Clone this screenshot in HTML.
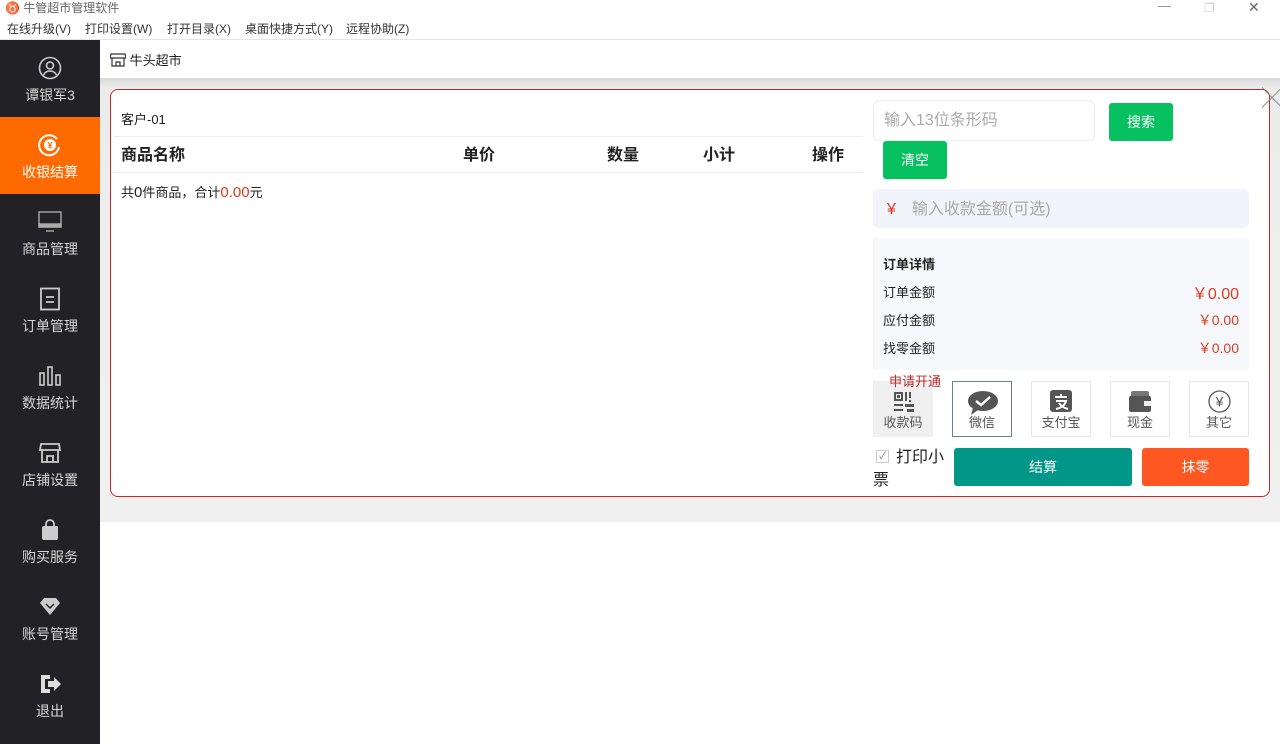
<!DOCTYPE html>
<html><head><meta charset="utf-8"><style>
*{margin:0;padding:0;box-sizing:border-box}
body{width:1280px;height:744px;overflow:hidden;background:#fff;font-family:"Liberation Sans","Noto Sans CJK SC",sans-serif;position:relative;color:#222}
.abs{position:absolute}
.title{top:0;left:0;width:1280px;height:18px;font-size:12px;color:#666;line-height:17px}
.menu{top:18px;left:0;width:1280px;height:22px;font-size:12px;color:#333;line-height:22px;border-bottom:1px solid #e5e5e5}
.menu span{position:absolute;top:0}
.side{top:40px;left:0;width:100px;height:704px;background:#222226}
.it{position:absolute;left:0;width:100px;height:77px;color:#d6d6d6;font-size:14px;text-align:center}
.it .ic{position:absolute;left:38px;top:16px;width:24px;height:24px}
.it .lb{position:absolute;top:45px;width:100px;left:0}
.act{background:#ff6a00;color:#fff}
.band{top:78px;left:100px;width:1180px;height:444px;background:linear-gradient(#d8d8d8,#ececec 10px,#f0f0f0)}
.panel{top:89px;left:110px;width:1160px;height:408px;background:#fff;border:1px solid #c0282a;border-radius:8px}
.btn{position:absolute;color:#fff;font-size:14px;text-align:center;border-radius:3px}
.pay{position:absolute;top:381px;width:60px;height:56px;border:1px solid #e6e6e6;font-size:13px;color:#555;text-align:center}
.pay .t{position:absolute;bottom:5px;width:100%;left:0}
.row{position:absolute;left:883px;width:356px;font-size:13px;color:#222}
.row b{font-weight:normal;position:absolute;right:0;color:#e03a1e;font-size:14px}
</style></head><body>
<div class="abs title"><span style="color:#a33;margin-left:5px">♉</span> 牛管超市管理软件
<span style="position:absolute;left:1158px;top:-3px;font-size:13px;color:#888">—</span>
<span style="position:absolute;left:1204px;top:0;color:#ccc">❐</span>
<span style="position:absolute;left:1248px;top:-1px;font-size:14px;color:#666">✕</span></div>
<div class="abs menu"><span style="left:7px">在线升级(V)</span><span style="left:85px">打印设置(W)</span><span style="left:167px">打开目录(X)</span><span style="left:245px">桌面快捷方式(Y)</span><span style="left:346px">远程协助(Z)</span></div>
<div class="abs side">
<div class="it" style="top:0"><svg class="ic" viewBox="0 0 24 24" fill="none" stroke="#ccc" stroke-width="1.6"><circle cx="12" cy="12" r="10.5"/><circle cx="12" cy="9.5" r="3.5"/><path d="M5.5 19c1.5-3 4-4 6.5-4s5 1 6.5 4"/></svg><div class="lb">谭银军3</div></div>
<div class="it act" style="top:77px"><svg class="ic" viewBox="0 0 24 24" fill="none" stroke="#fff" stroke-width="2"><path d="M19 6A10 10 0 1 0 21 14"/><circle cx="12" cy="12" r="6" fill="#fff" stroke="none"/><text x="12" y="15.5" font-size="9" text-anchor="middle" fill="#ff6a00" stroke="none" font-weight="bold">¥</text></svg><div class="lb">收银结算</div></div>
<div class="it" style="top:154px"><svg class="ic" viewBox="0 0 24 24" style="left:34px;width:32px" fill="none" stroke="#aaa" stroke-width="1.4"><rect x="1" y="2" width="22" height="15"/><rect x="1" y="14" width="22" height="3" fill="#aaa"/><path d="M8 21h8"/></svg><div class="lb">商品管理</div></div>
<div class="it" style="top:231px"><svg class="ic" viewBox="0 0 24 24" fill="none" stroke="#ccc" stroke-width="1.8"><rect x="3" y="1.5" width="18" height="21"/><path d="M8 10h8M8 15h8"/></svg><div class="lb">订单管理</div></div>
<div class="it" style="top:308px"><svg class="ic" viewBox="0 0 24 24" fill="none" stroke="#ccc" stroke-width="1.6"><rect x="2" y="9" width="4" height="12"/><rect x="10" y="3" width="4" height="18"/><rect x="18" y="11" width="4" height="10"/></svg><div class="lb">数据统计</div></div>
<div class="it" style="top:385px"><svg class="ic" viewBox="0 0 24 24" fill="none" stroke="#ccc" stroke-width="1.8"><path d="M3 3h18l1 6H2z"/><path d="M4 9v12h16V9M9 21v-6h6v6"/></svg><div class="lb">店铺设置</div></div>
<div class="it" style="top:462px"><svg class="ic" viewBox="0 0 24 24"><path d="M8 8V6a4 4 0 0 1 8 0v2" fill="none" stroke="#ccc" stroke-width="1.8"/><rect x="4" y="8" width="16" height="14" rx="2" fill="#ccc"/></svg><div class="lb">购买服务</div></div>
<div class="it" style="top:539px"><svg class="ic" viewBox="0 0 24 24"><path d="M2 8l4-5h12l4 5-10 12z" fill="#ccc"/><path d="M8 9l4 4 4-4" stroke="#222226" stroke-width="1.5" fill="none"/></svg><div class="lb">账号管理</div></div>
<div class="it" style="top:616px"><svg class="ic" viewBox="0 0 24 24" fill="#ddd"><path d="M3 3h9v4H7v10h5v4H3z"/><path d="M10 9h6V5l7 7-7 7v-4h-6z"/></svg><div class="lb">退出</div></div>
</div>
<div class="abs" style="top:50px;left:110px;font-size:13px;color:#222"><svg width="16" height="14" viewBox="0 0 16 14" fill="none" stroke="#333" stroke-width="1.2" style="vertical-align:-2px"><path d="M1 1h14l1 4H0z"/><path d="M2 5v8h12V5M6 13V9h4v4"/></svg> 牛头超市</div>
<div class="abs band"></div>
<div class="abs panel"></div>
<div class="abs" style="left:1262px;top:82px;font-size:20px;color:#777;font-weight:100">╳</div>
<div class="abs" style="left:121px;top:109px;font-size:13px">客户-01</div>
<div class="abs" style="left:113px;top:136px;width:750px;border-top:1px solid #eee;border-bottom:1px solid #eee;height:37px;font-size:16px;font-weight:bold;line-height:37px">
<span class="abs" style="left:8px">商品名称</span><span class="abs" style="left:350px">单价</span><span class="abs" style="left:494px">数量</span><span class="abs" style="left:590px">小计</span><span class="abs" style="left:699px">操作</span></div>
<div class="abs" style="left:121px;top:182px;font-size:13px">共<span style="font-size:15px">0</span>件商品，合计<span style="color:#e03a1e;font-size:15px">0.00</span>元</div>
<div class="abs" style="left:873px;top:100px;width:222px;height:41px;border:1px solid #eee;border-radius:6px;font-size:16px;color:#aaa;line-height:40px;padding-left:10px">输入13位条形码</div>
<div class="btn" style="left:1109px;top:103px;width:64px;height:38px;line-height:38px;background:#07c160">搜索</div>
<div class="btn" style="left:883px;top:141px;width:64px;height:38px;line-height:38px;background:#07c160">清空</div>
<div class="abs" style="left:873px;top:189px;width:376px;height:39px;background:#f2f4fb;border-radius:5px;font-size:16px;line-height:41px;color:#aaa"><span style="color:#e03a1e;margin:0 16px 0 14px">¥</span>输入收款金额(可选)</div>
<div class="abs" style="left:873px;top:238px;width:376px;height:132px;background:#f7f8fc"></div>
<div class="row" style="top:254px;font-weight:bold">订单详情</div>
<div class="row" style="top:282px">订单金额<b style="font-size:16px;top:-2px">￥0.00</b></div>
<div class="row" style="top:310px">应付金额<b>￥0.00</b></div>
<div class="row" style="top:338px">找零金额<b>￥0.00</b></div>
<div class="pay" style="left:873px;background:#f0f0f0;border-color:#f0f0f0"><svg class="abs" style="left:19px;top:9px" width="22" height="22" viewBox="0 0 22 22" fill="#555"><path d="M1 1h9v9H1zM3 3v5h5V3zM4 4h3v3H4z" fill-rule="evenodd"/><rect x="12" y="1" width="2" height="9"/><rect x="16" y="1" width="2" height="6"/><rect x="16" y="9" width="2" height="2"/><rect x="1" y="13" width="9" height="2"/><rect x="1" y="18" width="9" height="2"/><rect x="12" y="13" width="9" height="3"/><rect x="14" y="18" width="7" height="3"/></svg><div class="t">收款码</div></div>
<div class="abs" style="left:889px;top:371px;font-size:13px;color:#c0282a;z-index:2">申请开通</div>
<div class="pay" style="left:952px;border-color:#6b7f96"><svg class="abs" style="left:14px;top:8px" width="32" height="26" viewBox="0 0 32 26"><ellipse cx="16" cy="11" rx="15" ry="10" fill="#555"/><path d="M6 18l-2 7 7-5z" fill="#555"/><path d="M9 11l5 4 9-8" stroke="#fff" stroke-width="2.5" fill="none"/></svg><div class="t">微信</div></div>
<div class="pay" style="left:1031px"><svg class="abs" style="left:18px;top:8px" width="22" height="22" viewBox="0 0 22 22"><rect width="22" height="22" rx="3" fill="#555"/><path d="M5 7h12M11 4v3M6 11h10c-1 4-5 7-10 8M9 13c2 3 5 5 9 6" stroke="#fff" stroke-width="2" fill="none"/></svg><div class="t">支付宝</div></div>
<div class="pay" style="left:1110px"><svg class="abs" style="left:18px;top:8px" width="22" height="22" viewBox="0 0 22 22"><rect x="2" y="1" width="18" height="8" rx="2" fill="#777"/><rect y="6" width="22" height="16" rx="2" fill="#555"/><rect x="15" y="11" width="7" height="5" fill="#eee"/></svg><div class="t">现金</div></div>
<div class="pay" style="left:1189px"><svg class="abs" style="left:18px;top:8px" width="23" height="23" viewBox="0 0 23 23"><circle cx="11.5" cy="11.5" r="10.5" fill="none" stroke="#555" stroke-width="1.3"/><text x="11.5" y="16.5" font-size="14" text-anchor="middle" fill="#555">¥</text></svg><div class="t">其它</div></div>
<div class="abs" style="left:876px;top:450px;width:13px;height:13px;border:1px solid #ccc;font-size:10px;color:#888;line-height:11px;text-align:center">✓</div>
<div class="abs" style="left:873px;top:446px;width:75px;font-size:16px;line-height:23px;text-indent:23px">打印小票</div>
<div class="btn" style="left:954px;top:448px;width:178px;height:38px;line-height:38px;background:#009688">结算</div>
<div class="btn" style="left:1142px;top:448px;width:107px;height:38px;line-height:38px;background:#ff5722">抹零</div>
</body></html>
